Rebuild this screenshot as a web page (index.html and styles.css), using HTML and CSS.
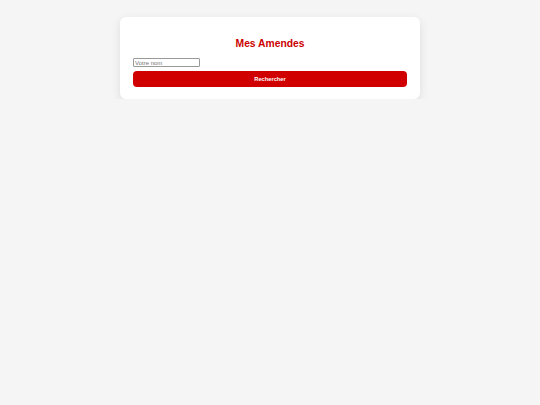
FILE: index.html
```html
<!DOCTYPE html>
<html lang="fr">
<head>
<meta charset="utf-8">
<title>Mes Amendes</title>
<link rel="stylesheet" href="styles.css">
</head>
<body>
<main class="card">
  <h1 class="title">Mes Amendes</h1>
  <form class="search">
    <input class="name-input" type="text" placeholder="Votre nom">
    <button class="search-btn" type="button">Rechercher</button>
  </form>
</main>
</body>
</html>
```
FILE: styles.css
```css
html, body {
  margin: 0;
  padding: 0;
  background: #f5f5f5;
  font-family: "Liberation Sans", Arial, sans-serif;
}
body {
  padding-top: 17px;
}
.card {
  width: 300px;
  box-sizing: border-box;
  margin: 0 auto;
  background: #ffffff;
  border-radius: 6px;
  padding: 13px 13px 12px;
  box-shadow: 0 3px 10px rgba(0, 0, 0, 0.1);
}
.title {
  margin: 8px 0 8.5px;
  text-align: center;
  color: #cc0000;
  font-size: 10.3px;
  line-height: 11.5px;
  font-weight: bold;
}
.search {
  display: flex;
  flex-direction: column;
  align-items: flex-start;
  gap: 3.5px;
  margin: 0;
}
.name-input {
  box-sizing: border-box;
  width: 67px;
  height: 9px;
  margin: 0;
  padding: 0 1px;
  border: 1px solid #999999;
  border-radius: 1px;
  font-family: "Liberation Sans", Arial, sans-serif;
  font-size: 6px;
  color: #333;
  outline: none;
}
.name-input::placeholder {
  color: #757575;
}
.search-btn {
  box-sizing: border-box;
  width: 100%;
  height: 16.5px;
  margin: 0;
  padding: 0;
  border: none;
  border-radius: 4px;
  background: #d10000;
  color: #ffffff;
  font-family: "Liberation Sans", Arial, sans-serif;
  font-size: 5.7px;
  font-weight: bold;
  cursor: pointer;
}
```
